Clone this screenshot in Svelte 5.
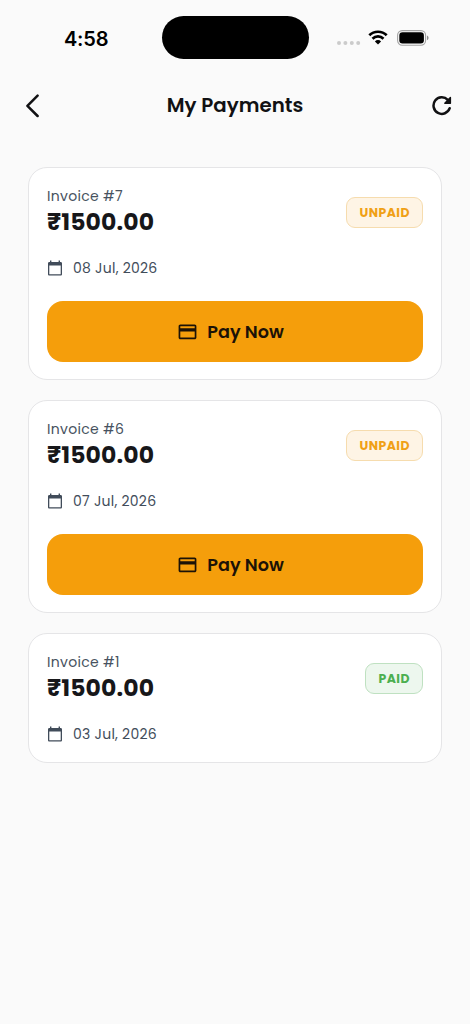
<script>
  const payments = [
    { id: 7, amount: 1500, date: "08 Jul, 2026", paid: false },
    { id: 6, amount: 1500, date: "07 Jul, 2026", paid: false },
    { id: 1, amount: 1500, date: "03 Jul, 2026", paid: true },
  ];
</script>

<div class="screen">
  <div class="status-bar">
    <span class="time">4:58</span>
    <div class="island"></div>
    <div class="indicators">
      <svg class="signal" width="24" height="4" viewBox="0 0 24 4">
        <circle cx="2" cy="2" r="2" />
        <circle cx="8.4" cy="2" r="2" />
        <circle cx="14.8" cy="2" r="2" />
        <circle cx="21.2" cy="2" r="2" />
      </svg>
      <svg class="wifi" width="20" height="15" viewBox="0 0 20 15">
        <path d="M1.3 5.3a12.4 12.4 0 0 1 17.4 0M4.5 8.7a7.9 7.9 0 0 1 11 0" />
        <path class="dot" d="M10 14.5 6.9 11.4a4.4 4.4 0 0 1 6.2 0z" />
      </svg>
      <svg class="battery" width="33" height="16" viewBox="0 0 33 16">
        <rect class="case" x="0.6" y="0.6" width="28" height="14.6" rx="4.6" />
        <rect x="2.3" y="2.3" width="24.6" height="11.2" rx="3.2" />
        <path class="tip" d="M30 5.6c2 .8 2 3.8 0 4.6z" />
      </svg>
    </div>
  </div>

  <header>
    <button class="icon-button" aria-label="Back">
      <svg width="14" height="24" viewBox="0 0 14 24">
        <path class="line" d="M12.6 1.6 2.4 11.8l10.2 10.2" />
      </svg>
    </button>
    <h1>My Payments</h1>
    <button class="icon-button" aria-label="Refresh">
      <svg width="20" height="20" viewBox="0 0 20 20">
        <path
          class="line"
          d="M17.7 12.2A8.3 8.3 0 1 1 15.8 3.8L17.6 5.6"
        />
        <path class="corner" d="M18.4 1.6v5.6h-5.6z" />
      </svg>
    </button>
  </header>

  <main>
    {#each payments as payment}
      <section class="card">
        <div class="summary">
          <div>
            <p class="invoice">Invoice #{payment.id}</p>
            <p class="amount">₹{payment.amount.toFixed(2)}</p>
          </div>
          <span class="badge" class:paid={payment.paid}>
            {payment.paid ? "PAID" : "UNPAID"}
          </span>
        </div>

        <div class="date">
          <svg width="16" height="16" viewBox="0 0 16 16">
            <path
              fill-rule="evenodd"
              d="M3 .4h1.4v1.5h7.2V.4H13v1.5h.7c.7 0 1.3.6 1.3 1.3v11c0 .7-.6 1.3-1.3 1.3H2.3c-.7 0-1.3-.6-1.3-1.3v-11c0-.7.6-1.3 1.3-1.3H3zM2.3 5.6v8.6h11.4V5.6z"
            />
          </svg>
          <span>{payment.date}</span>
        </div>

        {#if !payment.paid}
          <button class="pay">
            <svg width="19" height="16" viewBox="0 0 19 16">
              <path
                fill-rule="evenodd"
                d="M2.4.6h14.2c1 0 1.8.8 1.8 1.8v11c0 1-.8 1.8-1.8 1.8H2.4c-1 0-1.8-.8-1.8-1.8v-11C.6 1.4 1.4.6 2.4.6zM2.3 2.3v1.9h14.4V2.3zM2.3 7.5v6h14.4v-6z"
              />
            </svg>
            <span>Pay Now</span>
          </button>
        {/if}
      </section>
    {/each}
  </main>
</div>

<style>
  :global(body) {
    background: #fafafa;
  }

  .screen {
    box-sizing: border-box;
    min-height: 1024px;
    background: #fafafa;
    color: #111113;
    font-family: Poppins, Inter, sans-serif;
  }

  svg {
    display: block;
    fill: currentColor;
    flex: none;
  }

  button {
    border: 0;
    padding: 0;
    background: none;
    color: inherit;
    font: inherit;
  }

  .status-bar {
    display: grid;
    grid-template-columns: 1fr 147px 1fr;
    align-items: center;
    height: 75px;
    color: #000;
  }

  .time {
    padding: 2px 0 0 64px;
    font-family: Inter, sans-serif;
    font-size: 20px;
    font-weight: 600;
    line-height: 24px;
    letter-spacing: -0.2px;
  }

  .island {
    height: 43px;
    border-radius: 22px;
    background: #000;
  }

  .indicators {
    display: flex;
    align-items: center;
    padding-left: 28px;
  }

  .signal {
    margin-top: 11px;
    fill: #cbcbcb;
  }

  .wifi {
    margin-left: 7px;
    fill: none;
    stroke: #000;
    stroke-width: 2.7;
  }

  .wifi .dot {
    fill: #000;
    stroke: none;
  }

  .battery {
    margin-left: 9px;
  }

  .battery .case {
    fill: none;
    stroke: #a3a3a3;
    stroke-width: 1.1;
  }

  .battery .tip {
    fill: #8e8e8e;
  }

  header {
    display: flex;
    align-items: center;
    justify-content: space-between;
    height: 61px;
    padding: 0 18px 0 25px;
  }

  h1 {
    margin: 0 1px 1px 0;
    font-size: 19.8px;
    font-weight: 600;
    line-height: 30px;
  }

  .line {
    fill: none;
    stroke: currentColor;
    stroke-width: 2.5;
    stroke-linecap: round;
    stroke-linejoin: round;
  }

  .corner {
    stroke: currentColor;
    stroke-width: 1.4;
    stroke-linejoin: round;
  }

  main {
    display: flex;
    flex-direction: column;
    gap: 19.5px;
    padding: 30.5px 28px;
  }

  .card {
    box-sizing: border-box;
    padding: 18px 18px 17.5px;
    border: 1px solid #e5e5e7;
    border-radius: 19px;
    background: #fff;
  }

  .card:last-child {
    padding-bottom: 16.5px;
  }

  .summary {
    display: flex;
    align-items: center;
    justify-content: space-between;
    height: 53px;
  }

  p {
    margin: 0;
  }

  .invoice {
    color: #475260;
    font-size: 14px;
    line-height: 20px;
    letter-spacing: 0.3px;
  }

  .amount {
    color: #17171a;
    font-size: 23.5px;
    font-weight: 700;
    line-height: 32px;
    letter-spacing: 0.15px;
  }

  .badge {
    box-sizing: border-box;
    height: 31px;
    padding: 0 12px;
    border: 1px solid #f6dcae;
    border-radius: 9px;
    background: #fef4e5;
    color: #f0a016;
    font-size: 12.4px;
    font-weight: 700;
    line-height: 29px;
    letter-spacing: 0.5px;
  }

  .badge.paid {
    border-color: #bfe1c1;
    background: #edf7ee;
    color: #4caf50;
  }

  .date {
    display: flex;
    align-items: center;
    gap: 10px;
    height: 22px;
    margin-top: 18.5px;
    color: #414c5a;
    font-size: 14px;
    letter-spacing: 0.25px;
  }

  .pay {
    display: flex;
    align-items: center;
    justify-content: center;
    gap: 10px;
    width: 100%;
    height: 61px;
    margin-top: 21.5px;
    padding: 1px 8px 0 0;
    border-radius: 16px;
    background: #f59e0b;
    color: #1c1207;
    font-size: 17.6px;
    font-weight: 600;
  }
</style>
